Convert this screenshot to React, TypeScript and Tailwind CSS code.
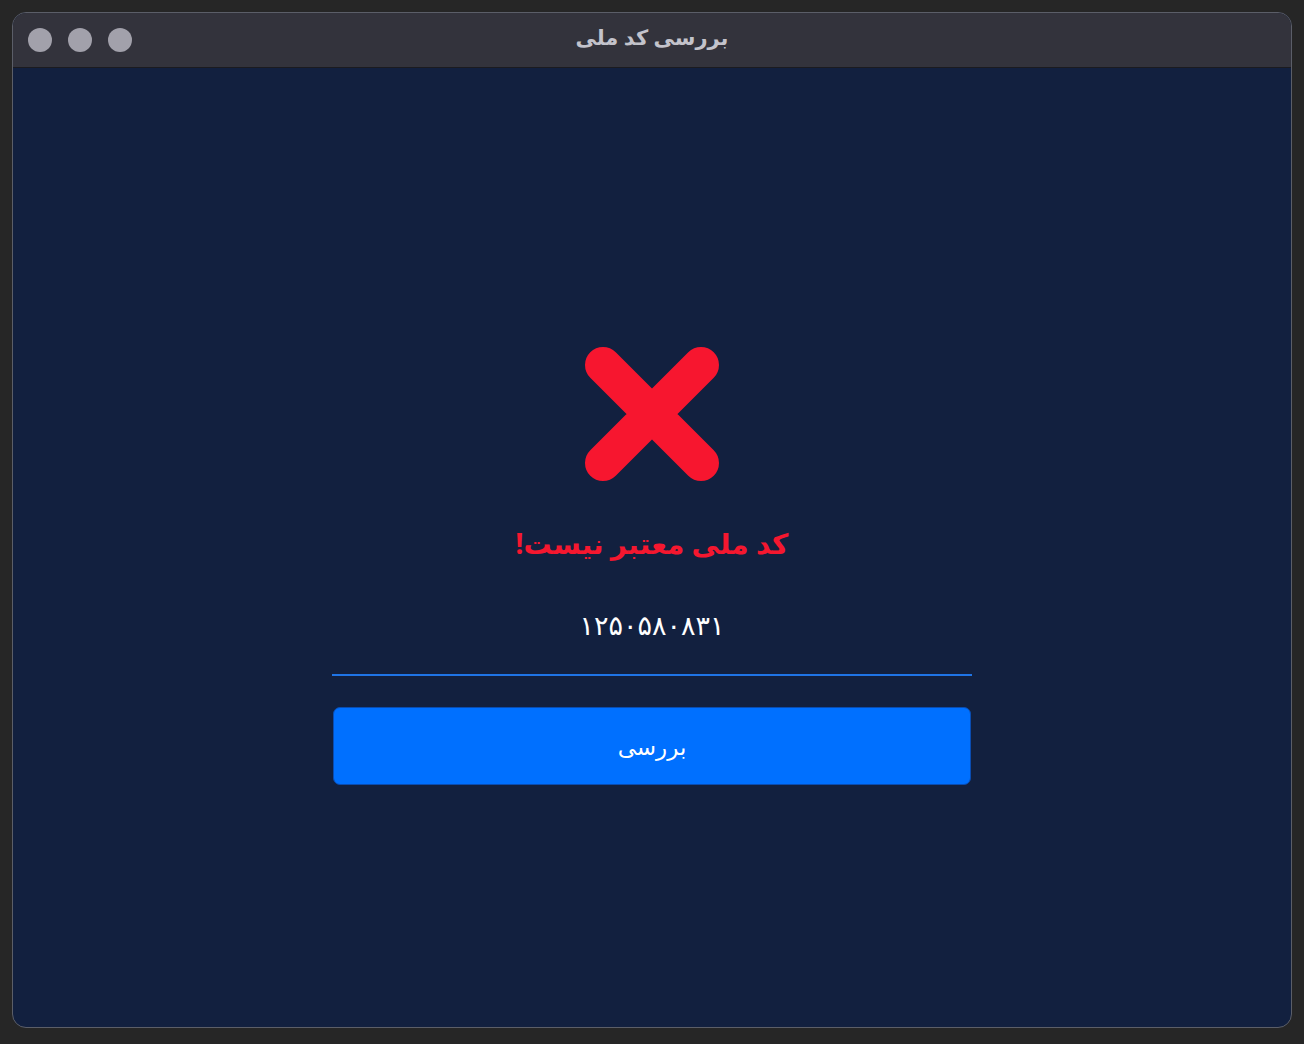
import React from 'react';

function CrossIcon() {
  return (
    <svg width="136" height="136" viewBox="0 0 136 136">
      <path
        d="M19 19 L117 117 M117 19 L19 117"
        stroke="#f7162f"
        strokeWidth="36"
        strokeLinecap="round"
        fill="none"
      />
    </svg>
  );
}

export default function App() {
  return (
    <div className="w-[1304px] h-[1044px] bg-[#262626] p-3 pb-4" style={{ fontFamily: '"Noto Sans", "DejaVu Sans", sans-serif' }}>
      <div className="w-full h-full rounded-[14px] border border-[#5b5e68] overflow-hidden flex flex-col bg-[#12203f]">
        {/* Title bar */}
        <div className="relative h-[55px] shrink-0 bg-[#33333c] border-b border-[#1b1b20] flex items-center px-[15px]">
          <div className="flex gap-4">
            <span className="w-6 h-6 rounded-full bg-[#a2a1ab]" />
            <span className="w-6 h-6 rounded-full bg-[#a2a1ab]" />
            <span className="w-6 h-6 rounded-full bg-[#a2a1ab]" />
          </div>
          <div dir="rtl" className="absolute inset-0 pb-1 flex items-center justify-center text-[21px] font-bold text-[#c3c3cb]">
            بررسی کد ملی
          </div>
        </div>

        {/* Content */}
        <div dir="rtl" className="flex-1 flex flex-col items-center pt-[278px]">
          <CrossIcon />
          <div className="mt-[47px] text-[28px] font-bold text-[#f5172f] leading-none">کد ملی معتبر نیست!</div>
          <div className="mt-[54px] w-[640px] border-b-2 border-[#1f74e6] pb-[36px] text-center text-[27px] text-white leading-none">
            ۱۲۵۰۵۸۰۸۳۱
          </div>
          <button className="mt-[31px] w-[638px] h-[78px] rounded-[7px] bg-[#0070ff] border border-[#0a4cb0] text-white text-[23px]">
            بررسی
          </button>
        </div>
      </div>
    </div>
  );
}
